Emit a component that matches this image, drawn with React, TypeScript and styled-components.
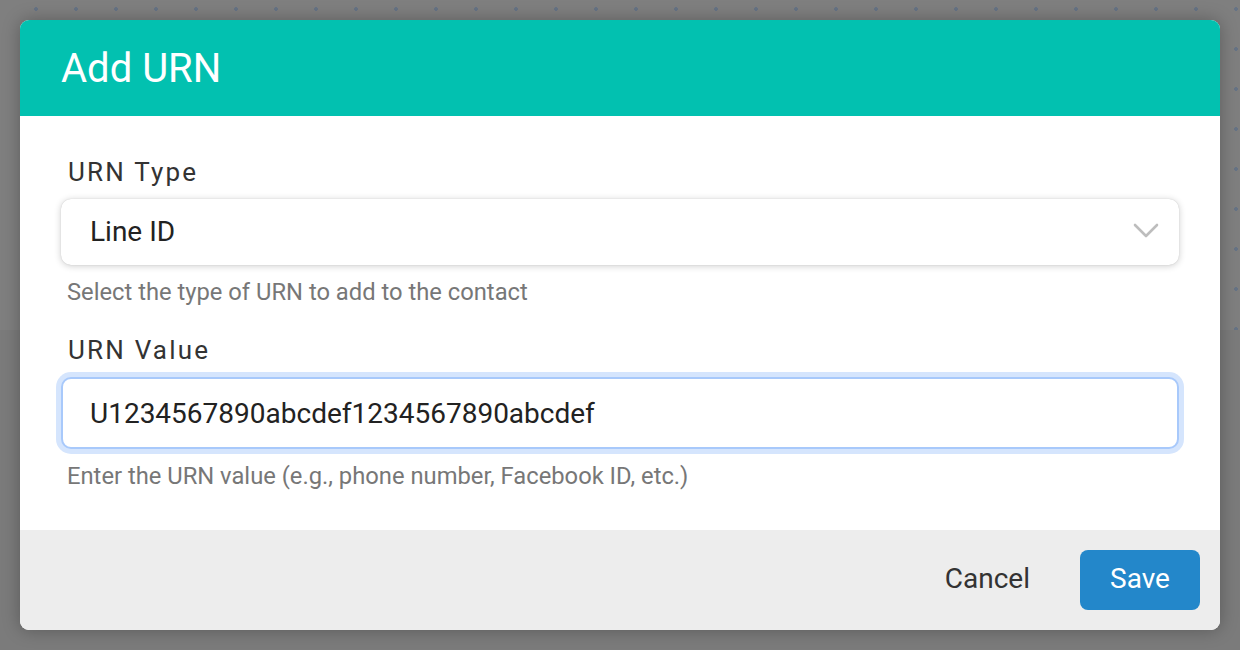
import styled, { createGlobalStyle } from "styled-components";

const GlobalStyle = createGlobalStyle`
  html, body {
    margin: 0;
    padding: 0;
    background: #7b7b7b;
    font-family: Roboto, "Liberation Sans", Arial, sans-serif;
  }
`;

const Backdrop = styled.div`
  position: relative;
  width: 1240px;
  height: 650px;
  padding: 20px;
  box-sizing: border-box;
  background: #7b7b7b;
  overflow: hidden;

  &::before {
    content: "";
    position: absolute;
    left: 0;
    top: 0;
    width: 100%;
    height: 330px;
    background-color: #7f7f7f;
    background-image: radial-gradient(circle, #667385 1.6px, transparent 2.2px);
    background-size: 40px 40px;
    background-position: 16px -11px;
  }
`;

const Dialog = styled.div`
  position: relative;
  display: flex;
  flex-direction: column;
  height: 610px;
  border-radius: 9px;
  overflow: hidden;
  background: #fff;
  box-shadow: 0 0 18px rgba(0, 0, 0, 0.28);
`;

const Header = styled.div`
  height: 96px;
  display: flex;
  align-items: center;
  padding: 0 41px;
  background: #02c1b0;
  color: #fff;
  font-size: 40px;
  font-weight: 400;
`;

const Body = styled.div`
  flex: 1;
  padding: 40px 41px 0 41px;
`;

const Field = styled.div<{ $gap?: number }>`
  display: flex;
  flex-direction: column;
  margin-top: ${(p) => p.$gap ?? 0}px;
`;

const Label = styled.label`
  padding-left: 7px;
  font-size: 26px;
  line-height: 32px;
  letter-spacing: 2.2px;
  color: #333;
`;

const SelectBox = styled.div`
  margin-top: 11px;
  height: 66px;
  box-sizing: border-box;
  display: flex;
  align-items: center;
  justify-content: space-between;
  padding: 0 20px 2px 29px;
  border-radius: 10px;
  background: #fff;
  box-shadow: 0 0 1px rgba(0, 0, 0, 0.2), 0 1px 7px rgba(0, 0, 0, 0.2);
  font-size: 28px;
  color: #222;
`;

const TextInput = styled.input`
  margin-top: 11px;
  height: 72px;
  box-sizing: border-box;
  padding: 0 27px;
  border: 2px solid #a8c9fb;
  border-radius: 10px;
  outline: none;
  box-shadow: 0 0 0 5px #d5e5fd;
  font-family: inherit;
  font-size: 28px;
  color: #222;
`;

const Help = styled.div<{ $top: number }>`
  margin-top: ${(p) => p.$top}px;
  padding-left: 6px;
  font-size: 23.75px;
  line-height: 28px;
  color: #777;
`;

const Footer = styled.div`
  height: 100px;
  display: flex;
  align-items: center;
  justify-content: flex-end;
  gap: 50px;
  padding: 0 20px;
  background: #ededed;
`;

const Button = styled.button<{ $primary?: boolean }>`
  height: 60px;
  min-width: ${(p) => (p.$primary ? 120 : 0)}px;
  padding: 0 ${(p) => (p.$primary ? 30 : 0)}px 3px;
  border: none;
  border-radius: 8px;
  font-family: inherit;
  font-size: 28px;
  background: ${(p) => (p.$primary ? "#2387ca" : "transparent")};
  color: ${(p) => (p.$primary ? "#fff" : "#333")};
`;

const Chevron = () => (
  <svg width="26" height="16" viewBox="0 0 26 16" fill="none">
    <polyline
      points="2,2 13,13 24,2"
      stroke="#bdbdbd"
      strokeWidth="2.6"
      strokeLinecap="round"
      strokeLinejoin="round"
    />
  </svg>
);

export default function App() {
  return (
    <>
      <GlobalStyle />
      <Backdrop>
        <Dialog>
          <Header>Add URN</Header>
          <Body>
            <Field>
              <Label>URN Type</Label>
              <SelectBox>
                <span>Line ID</span>
                <Chevron />
              </SelectBox>
              <Help $top={13}>Select the type of URN to add to the contact</Help>
            </Field>
            <Field $gap={28}>
              <Label>URN Value</Label>
              <TextInput readOnly value="U1234567890abcdef1234567890abcdef" />
              <Help $top={13}>Enter the URN value (e.g., phone number, Facebook ID, etc.)</Help>
            </Field>
          </Body>
          <Footer>
            <Button>Cancel</Button>
            <Button $primary>Save</Button>
          </Footer>
        </Dialog>
      </Backdrop>
    </>
  );
}
